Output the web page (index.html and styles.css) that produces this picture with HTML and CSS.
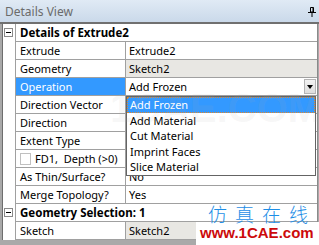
FILE: index.html
```html
<!DOCTYPE html>
<html lang="en">
<head>
<meta charset="utf-8">
<title>Details View</title>
<link rel="stylesheet" href="styles.css">
</head>
<body>
<div class="view">
  <div class="caption">
    <span>Details View</span>
    <svg class="pin" width="8" height="10" viewBox="0 0 8 10"><path d="M2.5 0.5h3v4.5h-3z M5 0.5v4.5" fill="none" stroke="#000"/><path d="M0 5.5h8 M4 5.5v4.5" stroke="#000"/></svg>
  </div>
  <div class="sheet">
    <div class="row"><span class="tog"><i class="box"></i></span><span class="head">Details of Extrude2</span></div>
    <div class="row"><span class="tog"></span><span class="name">Extrude</span><span class="val">Extrude2</span></div>
    <div class="row"><span class="tog"></span><span class="name">Geometry</span><span class="val ro">Sketch2</span></div>
    <div class="row"><span class="tog"></span><span class="name sel">Operation</span>
      <span class="val combo"><span class="txt">Add Frozen</span><b class="drop"></b>
        <ul class="list">
          <li class="on">Add Frozen</li>
          <li>Add Material</li>
          <li>Cut Material</li>
          <li>Imprint Faces</li>
          <li>Slice Material</li>
        </ul>
      </span>
    </div>
    <div class="row"><span class="tog"></span><span class="name">Direction Vector</span><span class="val"></span></div>
    <div class="row"><span class="tog"></span><span class="name">Direction</span><span class="val"></span></div>
    <div class="row"><span class="tog"></span><span class="name">Extent Type</span><span class="val"></span></div>
    <div class="row"><span class="tog"></span><span class="name"><i class="chk"></i>FD1,&nbsp; Depth (&gt;0)</span><span class="val"></span></div>
    <div class="row"><span class="tog"></span><span class="name">As Thin/Surface?</span><span class="val">No</span></div>
    <div class="row"><span class="tog"></span><span class="name">Merge Topology?</span><span class="val">Yes</span></div>
    <div class="row"><span class="tog"><i class="box"></i></span><span class="head">Geometry Selection: 1</span></div>
    <div class="row"><span class="tog"></span><span class="name">Sketch</span><span class="val ro">Sketch2</span></div>
  </div>
  <div class="mark">1CAE.COM</div>
  <div class="stamp">
    <div class="cn">仿真在线</div>
    <div class="url">www.1CAE.com</div>
  </div>
</div>
</body>
</html>
```

FILE: styles.css
```css
body {
  margin: 0;
  background-color: #a9a9a9;
  font-family: "Noto Sans", "Open Sans", sans-serif;
  font-size: 11px;
  color: #000;
}
.view {
  position: relative;
  width: 319px;
  height: 245px;
  overflow: hidden;
}
.caption {
  display: flex;
  align-items: center;
  justify-content: space-between;
  height: 22px;
  padding: 0 3px 0 5px;
  background: linear-gradient(#e0eaf5, #cad9ea);
  border-bottom: 2px solid #707070;
  color: #6b6b6b;
  font-size: 12px;
}
.pin {
  margin-top: 2px;
}
.sheet {
  margin: 0 1px 0 2px;
  border-left: 1px solid #6e6e6e;
  border-right: 1px solid #8a8a8a;
  background-color: #fff;
}
.row {
  display: flex;
  height: 18px;
}
.tog {
  width: 12px;
  flex: none;
  position: relative;
}
.box {
  position: absolute;
  left: 1px;
  top: 4px;
  width: 9px;
  height: 9px;
  box-sizing: border-box;
  border: 1px solid #8a8a8a;
  background-color: #fff;
}
.box::after {
  content: "";
  position: absolute;
  left: 1px;
  top: 3px;
  width: 5px;
  height: 1px;
  background-color: #000;
}
.name, .val, .head {
  box-sizing: border-box;
  height: 18px;
  line-height: 17px;
  border-left: 1px solid #a0a0a0;
  border-bottom: 1px solid #a0a0a0;
  white-space: nowrap;
}
.name {
  width: 110px;
  flex: none;
  padding-left: 4px;
  display: flex;
  align-items: center;
}
.head {
  flex: 1;
  padding-left: 4px;
  font-weight: bold;
  font-size: 11.5px;
}
.val {
  flex: 1;
  padding-left: 3px;
  position: relative;
}
.ro {
  background-color: #e8e7e3;
}
.sel {
  background-color: #3399ff;
  color: #fff;
}
.combo {
  display: flex;
  align-items: center;
}
.combo .txt {
  flex: 1;
}
.drop {
  width: 12px;
  height: 15px;
  box-sizing: border-box;
  margin-right: 1px;
  border: 1px solid #b4b4b4;
  background: linear-gradient(#f2f2f2, #dedede);
  position: relative;
}
.drop::after {
  content: "";
  position: absolute;
  left: 2px;
  top: 5px;
  border-left: 3.5px solid transparent;
  border-right: 3.5px solid transparent;
  border-top: 4px solid #000;
}
.chk {
  width: 11px;
  height: 12px;
  box-sizing: border-box;
  border: 1px solid #c0c0c0;
  background-color: #fff;
  margin-right: 4px;
}
.list {
  position: absolute;
  top: 18px;
  left: 0;
  right: 1px;
  margin: 0;
  padding: 0;
  list-style: none;
  background-color: #fff;
  border: 1px solid #646464;
  z-index: 2;
}
.list li {
  height: 15.6px;
  line-height: 15.6px;
  padding-left: 3px;
}
.list li.on {
  background-color: #3399ff;
  color: #fff;
  outline: 1px dotted #e0862a;
  outline-offset: -1px;
}
.mark {
  position: absolute;
  left: 110px;
  top: 86px;
  font-family: "Liberation Sans", sans-serif;
  font-weight: bold;
  font-size: 40px;
  color: rgba(170, 170, 170, 0.1);
  z-index: 3;
  pointer-events: none;
}
.stamp {
  position: absolute;
  left: 196px;
  top: 205px;
  right: 0;
  bottom: 0;
  z-index: 3;
}
.cn {
  height: 17px;
  line-height: 17px;
  padding-left: 12px;
  font-family: "Noto Sans CJK SC", sans-serif;
  font-size: 19px;
  font-weight: 300;
  letter-spacing: 8px;
  color: #1e8ee6;
}
.url {
  height: 23px;
  line-height: 22px;
  padding-left: 4px;
  background-color: #fff;
  font-family: "Liberation Sans", Arial, sans-serif;
  font-weight: bold;
  font-size: 15px;
  color: #cc0a0a;
}
```
